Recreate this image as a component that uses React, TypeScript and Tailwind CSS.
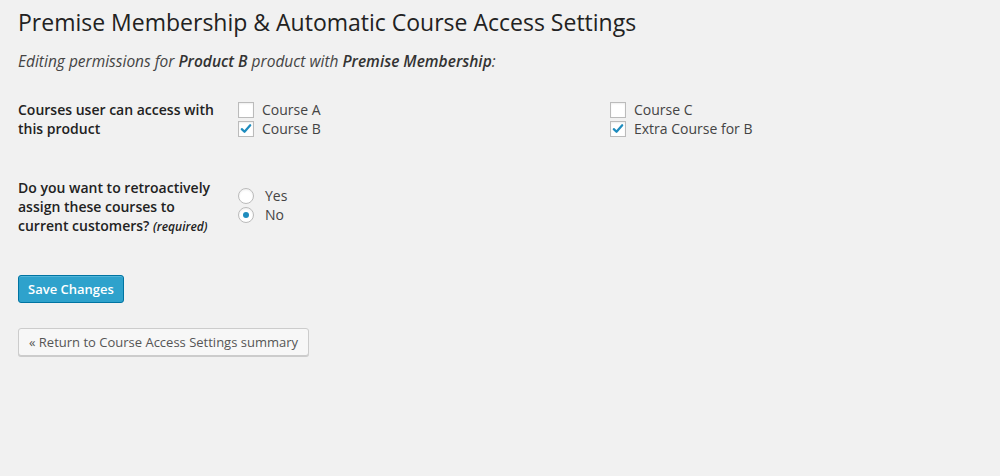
import React from "react";

const font = { fontFamily: '"Open Sans", "Noto Sans", sans-serif' };

function Checkbox({ checked }: { checked?: boolean }) {
  return (
    <span className="mr-[8px] inline-flex h-[16px] w-[16px] shrink-0 items-center justify-center border border-[#bbb] bg-white shadow-[inset_0_1px_2px_rgba(0,0,0,0.07)]">
      {checked && (
        <svg viewBox="0 0 16 16" className="h-[14px] w-[14px]">
          <path d="M3.2 8.2 L6.3 11.2 L12.8 3.8" fill="none" stroke="#1e8cbe" strokeWidth="2.6" strokeLinecap="round" strokeLinejoin="round" />
        </svg>
      )}
    </span>
  );
}

function Radio({ checked }: { checked?: boolean }) {
  return (
    <span className="mr-[11px] inline-flex h-[16px] w-[16px] shrink-0 items-center justify-center rounded-full border border-[#bbb] bg-white shadow-[inset_0_1px_2px_rgba(0,0,0,0.07)]">
      {checked && <span className="h-[6px] w-[6px] rounded-full bg-[#1e8cbe]" />}
    </span>
  );
}

function Option({ label, checked }: { label: string; checked?: boolean }) {
  return (
    <div className="flex h-[19px] items-center text-[14px] text-[#444]">
      <Checkbox checked={checked} />
      {label}
    </div>
  );
}

export default function App() {
  return (
    <div className="min-h-[476px] bg-[#f1f1f1] pl-[18px] pr-[18px]" style={font}>
      <h2 className="pt-[8px] text-[23px] font-normal leading-[29px] text-[#222]">
        Premise Membership &amp; Automatic Course Access Settings
      </h2>
      <p className="mt-[14px] text-[15.5px] italic leading-[20px] text-[#444]">
        Editing permissions for <b className="font-semibold text-[#333]">Product B</b> product with{" "}
        <b className="font-semibold text-[#333]">Premise Membership</b>:
      </p>

      <div className="mt-[29px] flex">
        <div className="w-[220px] pr-[10px] text-[14px] font-semibold leading-[19px] text-[#222]">
          Courses user can access with this product
        </div>
        <div className="grid flex-1 grid-cols-2">
          <div>
            <Option label="Course A" />
            <Option label="Course B" checked />
          </div>
          <div>
            <Option label="Course C" />
            <Option label="Extra Course for B" checked />
          </div>
        </div>
      </div>

      <div className="mt-[40px] flex">
        <div className="w-[220px] pr-[10px] text-[14px] font-semibold leading-[19px] text-[#222]">
          Do you want to retroactively assign these courses to current customers?{" "}
          <i className="text-[12px]">(required)</i>
        </div>
        <div className="pt-[8px]">
          <div className="flex h-[19px] items-center text-[14px] text-[#444]">
            <Radio />
            Yes
          </div>
          <div className="flex h-[19px] items-center text-[14px] text-[#444]">
            <Radio checked />
            No
          </div>
        </div>
      </div>

      <button className="mt-[39px] block h-[28px] rounded-[3px] border border-[#0074a2] bg-[#2ea2cc] px-[9px] text-[13px] font-semibold leading-[26px] text-white shadow-[inset_0_1px_0_rgba(120,200,230,0.5)]">
        Save Changes
      </button>

      <button className="mt-[25px] block h-[28px] rounded-[3px] border border-[#ccc] bg-[#f7f7f7] px-[10px] text-[13px] leading-[26px] text-[#555] shadow-[0_1px_0_#ccc]">
        « Return to Course Access Settings summary
      </button>
    </div>
  );
}
